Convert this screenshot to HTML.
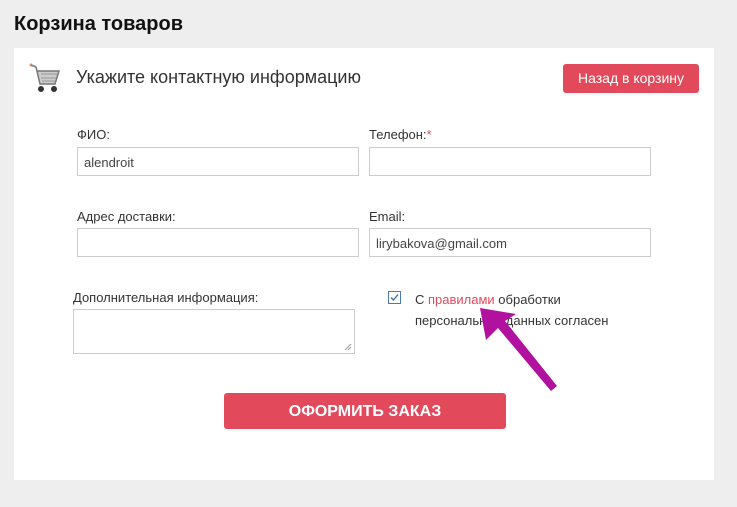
<!DOCTYPE html>
<html><head><meta charset="utf-8"><style>
*{box-sizing:border-box;margin:0;padding:0}
body{width:737px;height:507px;background:#eeeeee;font-family:"Liberation Sans",Arial,sans-serif;position:relative;overflow:hidden;color:#333}
h1{position:absolute;left:14px;top:13px;font-size:20px;font-weight:bold;color:#111}
.card{position:absolute;left:14px;top:48px;width:700px;height:432px;background:#fff}
.t{position:absolute;font-size:13px;color:#333}
.in{position:absolute;height:29px;border:1px solid #ccc;background:#fff;font-size:13px;padding:7px 6px;color:#444}
.btn{position:absolute;background:#e24a5b;color:#fff;border-radius:3px;text-align:center}
</style></head><body>
<h1>Корзина товаров</h1>
<div class="card">
<svg style="position:absolute;left:14px;top:14px" width="34" height="32" viewBox="0 0 34 32">
<circle cx="3" cy="3" r="1.5" fill="#d97"/>
<line x1="3" y1="3" x2="8" y2="5" stroke="#888" stroke-width="2"/>
<path d="M8 5 L12 22 L27 22 L31 9 L9 9 Z" fill="#ccc" stroke="#777" stroke-width="1.5"/>
<path d="M13 12 H29 M13 16 H28 M14 19 H27" stroke="#999" stroke-width="1"/>
<circle cx="13" cy="27" r="3" fill="#333"/><circle cx="26" cy="27" r="3" fill="#333"/>
</svg>
<div class="t" style="left:62px;top:19px;font-size:18px;color:#333">Укажите контактную информацию</div>
<div class="btn" style="left:549px;top:16px;width:136px;height:29px;line-height:29px;font-size:14px">Назад в корзину</div>
<div class="t" style="left:63px;top:79px">ФИО:</div>
<div class="in" style="left:63px;top:99px;width:282px">alendroit</div>
<div class="t" style="left:355px;top:79px">Телефон:<span style="color:#e24a5b">*</span></div>
<div class="in" style="left:355px;top:99px;width:282px"></div>
<div class="t" style="left:63px;top:161px">Адрес доставки:</div>
<div class="in" style="left:63px;top:180px;width:282px"></div>
<div class="t" style="left:355px;top:161px">Email:</div>
<div class="in" style="left:355px;top:180px;width:282px">lirybakova@gmail.com</div>
<div class="t" style="left:59px;top:242px">Дополнительная информация:</div>
<div class="in" style="left:59px;top:261px;width:282px;height:45px"></div>
<svg style="position:absolute;left:329px;top:294px" width="9" height="9"><path d="M8 2 L2 8 M8 5 L5 8" stroke="#999"/></svg>
<svg style="position:absolute;left:374px;top:243px" width="13" height="13"><rect x="0.5" y="0.5" width="12" height="12" fill="#fff" stroke="#4a7ab0"/><path d="M3 6.5 L5.5 9 L10 3.5" fill="none" stroke="#3a6aa0" stroke-width="1.3"/></svg>
<div class="t" style="left:401px;top:241px;line-height:21px">С <span style="color:#e24a5b">правилами</span> обработки<br>персональных данных согласен</div>
<div class="btn" style="left:210px;top:345px;width:282px;height:36px;line-height:38px;font-size:16px;font-weight:bold">ОФОРМИТЬ ЗАКАЗ</div>
</div>
<svg style="position:absolute;left:0;top:0" width="737" height="507"><polygon points="480,308 516,314 505,321 557,386 551,391 498,328 486,340" fill="#b0119e"/></svg>
</body></html>
